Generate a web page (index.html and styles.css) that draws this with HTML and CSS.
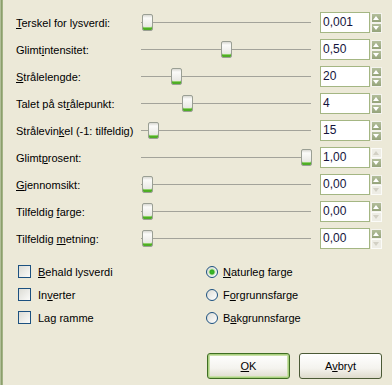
FILE: index.html
```html
<!DOCTYPE html>
<html lang="no">
<head>
    <meta charset="UTF-8">
    <meta name="viewport" content="width=device-width, initial-scale=1.0">
    <title>Glimt</title>
    <link rel="stylesheet" href="styles.css">
</head>
<body>
    <div class="edge"></div>
    <div class="dialog">
        <div class="rows">
            <div class="row">
                <label class="lbl"><u>T</u>erskel for lysverdi:</label>
                <div class="slider"><div class="thumb" style="left: 1px"></div></div>
                <div class="field">0,001</div>
                <div class="arrows"><span class="arr up"></span><span class="arr down"></span></div>
            </div>
            <div class="row">
                <label class="lbl">Glimt<u>i</u>ntensitet:</label>
                <div class="slider"><div class="thumb" style="left: 80px"></div></div>
                <div class="field">0,50</div>
                <div class="arrows"><span class="arr up"></span><span class="arr down"></span></div>
            </div>
            <div class="row">
                <label class="lbl"><u>S</u>trålelengde:</label>
                <div class="slider"><div class="thumb" style="left: 30px"></div></div>
                <div class="field">20</div>
                <div class="arrows"><span class="arr up"></span><span class="arr down"></span></div>
            </div>
            <div class="row">
                <label class="lbl">Talet på st<u>r</u>ålepunkt:</label>
                <div class="slider"><div class="thumb" style="left: 41px"></div></div>
                <div class="field">4</div>
                <div class="arrows"><span class="arr up"></span><span class="arr down"></span></div>
            </div>
            <div class="row">
                <label class="lbl">Strålevin<u>k</u>el (-1: tilfeldig)</label>
                <div class="slider"><div class="thumb" style="left: 7px"></div></div>
                <div class="field">15</div>
                <div class="arrows"><span class="arr up"></span><span class="arr down"></span></div>
            </div>
            <div class="row">
                <label class="lbl">Glimt<u>p</u>rosent:</label>
                <div class="slider"><div class="thumb" style="left: 160px"></div></div>
                <div class="field">1,00</div>
                <div class="arrows"><span class="arr up off"></span><span class="arr down"></span></div>
            </div>
            <div class="row">
                <label class="lbl"><u>G</u>jennomsikt:</label>
                <div class="slider"><div class="thumb" style="left: 1px"></div></div>
                <div class="field">0,00</div>
                <div class="arrows"><span class="arr up"></span><span class="arr down off"></span></div>
            </div>
            <div class="row">
                <label class="lbl">Tilfeldig <u>f</u>arge:</label>
                <div class="slider"><div class="thumb" style="left: 1px"></div></div>
                <div class="field">0,00</div>
                <div class="arrows"><span class="arr up"></span><span class="arr down off"></span></div>
            </div>
            <div class="row">
                <label class="lbl">Tilfeldig <u>m</u>etning:</label>
                <div class="slider"><div class="thumb" style="left: 1px"></div></div>
                <div class="field">0,00</div>
                <div class="arrows"><span class="arr up"></span><span class="arr down off"></span></div>
            </div>
        </div>

        <div class="options">
            <label class="opt"><span class="check"></span><span><u>B</u>ehald lysverdi</span></label>
            <label class="opt"><span class="radio on"></span><span><u>N</u>aturleg farge</span></label>
            <label class="opt"><span class="check"></span><span>In<u>v</u>erter</span></label>
            <label class="opt"><span class="radio"></span><span>F<u>o</u>rgrunnsfarge</span></label>
            <label class="opt"><span class="check"></span><span>La<u>g</u> ramme</span></label>
            <label class="opt"><span class="radio"></span><span>B<u>a</u>kgrunnsfarge</span></label>
        </div>

        <div class="buttons">
            <button class="btn default"><u>O</u>K</button>
            <button class="btn">A<u>v</u>bryt</button>
        </div>
    </div>
</body>
</html>
```

FILE: styles.css
```css
body {
    margin: 0;
    height: 385px;
    display: flex;
    background: #ece9d8;
    font-family: "Liberation Sans", Arial, sans-serif;
    font-size: 11px;
    color: #000;
    overflow: hidden;
}
u {
    text-decoration: underline;
    text-underline-offset: 1px;
}
.edge {
    flex: none;
    width: 3px;
    background: linear-gradient(to right, #c4cfae, #8c9f6c, #aebd92);
}
.dialog {
    flex: 1;
    padding: 9px 12px 0 13px;
}
.row {
    display: flex;
    align-items: center;
    height: 27px;
}
.row > * {
    flex: none;
}
.lbl {
    width: 125px;
    white-space: nowrap;
}
.slider {
    position: relative;
    width: 171px;
    height: 17px;
    margin-right: 8px;
}
.slider::before {
    content: "";
    position: absolute;
    left: 0;
    right: 1px;
    top: 8px;
    height: 1px;
    background: #a3a39a;
}
.thumb {
    position: absolute;
    top: 0;
    width: 9px;
    height: 15px;
    border: 1px solid #9a9f94;
    border-radius: 2px;
    background: linear-gradient(#d8d8d2 0, #fbfbf9 3px, #e8e8e3 12px);
    box-shadow: inset 0 -2px 0 #4fae25, inset 0 -3px 0 #8fd06a;
}
.field {
    width: 46px;
    height: 19px;
    line-height: 19px;
    padding-left: 2px;
    border: 1px solid #a4b683;
    background: #fff;
    color: #14143c;
    font-size: 12px;
}
.arrows {
    display: flex;
    flex-direction: column;
    margin-left: 1px;
}
.arr {
    position: relative;
    width: 9px;
    height: 8px;
    border: 1px solid #f4f3ee;
    background: linear-gradient(#b3be9b, #95a37a);
}
.arr::after {
    content: "";
    position: absolute;
    left: 1px;
    border-left: 3.5px solid transparent;
    border-right: 3.5px solid transparent;
}
.up::after {
    top: 2px;
    border-bottom: 4px solid #fff;
}
.down::after {
    top: 2px;
    border-top: 4px solid #fff;
}
.arr.off {
    border-color: #fbfbf8;
    background: #eeede5;
}
.up.off::after {
    border-bottom-color: #d2d0c4;
}
.down.off::after {
    border-top-color: #d2d0c4;
}
.options {
    display: grid;
    grid-template-columns: 188px 1fr;
    grid-auto-rows: 23px;
    margin-top: 8px;
    padding-left: 2px;
}
.opt {
    display: flex;
    align-items: center;
    white-space: nowrap;
}
.check {
    flex: none;
    width: 11px;
    height: 11px;
    margin-right: 7px;
    border: 1px solid #1c5180;
    background: linear-gradient(135deg, #dcdcd5, #fbfbf9);
}
.radio {
    flex: none;
    width: 10px;
    height: 10px;
    margin-right: 5px;
    border: 1px solid #1c5180;
    border-radius: 50%;
    background: linear-gradient(135deg, #dcdcd5, #fff);
}
.radio.on {
    background: radial-gradient(circle, #3fbf2a 0, #2fa81e 2px, #bfe6b0 3px, transparent 4px), linear-gradient(135deg, #dcdcd5, #fff);
}
.buttons {
    display: flex;
    justify-content: flex-end;
    gap: 9px;
    margin-top: 24px;
}
.btn {
    width: 83px;
    height: 26px;
    padding: 0;
    border: 1px solid #4b5a36;
    border-radius: 3px;
    background: linear-gradient(#ffffff, #f4f3ee 60%, #dedbcc);
    font-family: "Liberation Sans", Arial, sans-serif;
    font-size: 11px;
    color: #000;
}
.btn.default {
    border-color: #3e6e22;
    box-shadow: inset 0 0 0 1px #a9cf7e, inset 0 0 0 2px #c8e0a8;
}
```
